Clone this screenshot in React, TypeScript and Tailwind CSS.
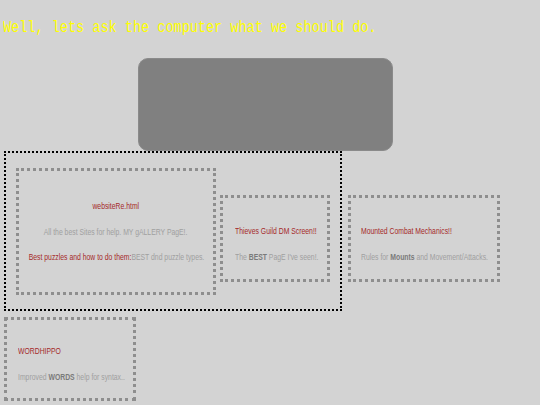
import React from 'react';

const sans = { fontFamily: "'Liberation Sans', Arial, sans-serif" };

const Box: React.FC<{ className: string; children: React.ReactNode }> = ({ className, children }) => (
  <div className={`border-[3.5px] border-dotted border-[#8e8e8e] text-[9px] leading-[10px] whitespace-nowrap ${className}`} style={sans}>
    {children}
  </div>
);

export default function App() {
  return (
    <div className="w-[540px] h-[405px] overflow-hidden bg-[#d3d3d3]">
      <div className="h-[58px] pt-[20px] pl-[3px]">
        <p className="origin-left scale-x-[0.82] text-[16.5px] leading-[16px] text-[#ffff00] whitespace-nowrap" style={{ fontFamily: "'Liberation Mono', 'Courier New', monospace" }}>
          Well, lets ask the computer what we should do.
        </p>
      </div>

      <div className="ml-[138px] w-[255px] h-[93px] rounded-[10px] bg-[#808080] border border-[#8a8a8a]" />

      <div className="flex items-start pl-[4px]">
        <div className="flex items-end border-2 border-dotted border-black pt-[15px] pb-[14px] pl-[10px] pr-[10px] gap-[4px]">
          <Box className="w-[200px] pt-[30px] pb-[30px] flex flex-col items-center">
            <p className="scale-x-[0.76] text-[#a52a2a]">websiteRe.html</p>
            <p className="scale-x-[0.76] mt-[16px] text-[#a0a0a0]">All the best Sites for help. MY gALLERY PagE!.</p>
            <p className="scale-x-[0.76] mt-[15px] text-[#a0a0a0]">
              <span className="text-[#a52a2a]">Best puzzles and how to do them:</span>BEST dnd puzzle types.
            </p>
          </Box>
          <Box className="w-[110px] mb-[13px] pt-[28px] pb-[17px] pl-[12px]">
            <p className="origin-left scale-x-[0.76] text-[#a52a2a]">Thieves Guild DM Screen!!</p>
            <p className="origin-left scale-x-[0.76] mt-[16px] text-[#a0a0a0]">
              The <b className="text-[#7a7a7a]">BEST</b> PagE I've seen!.
            </p>
          </Box>
        </div>
        <Box className="ml-[6px] mt-[44px] w-[152px] pt-[28px] pb-[17px] pl-[10px]">
          <p className="origin-left scale-x-[0.76] text-[#a52a2a]">Mounted Combat Mechanics!!</p>
          <p className="origin-left scale-x-[0.76] mt-[16px] text-[#a0a0a0]">
            Rules for <b className="text-[#7a7a7a]">Mounts</b> and Movement/Attacks.
          </p>
        </Box>
      </div>

      <div className="pl-[4px] pt-[6px]">
        <Box className="w-[132px] pt-[26px] pb-[16px] pl-[11px]">
          <p className="origin-left scale-x-[0.76] text-[#a52a2a]">WORDHIPPO</p>
          <p className="origin-left scale-x-[0.76] mt-[16px] text-[#a0a0a0]">
            Improved <b className="text-[#7a7a7a]">WORDS</b> help for syntax..
          </p>
        </Box>
      </div>
    </div>
  );
}
